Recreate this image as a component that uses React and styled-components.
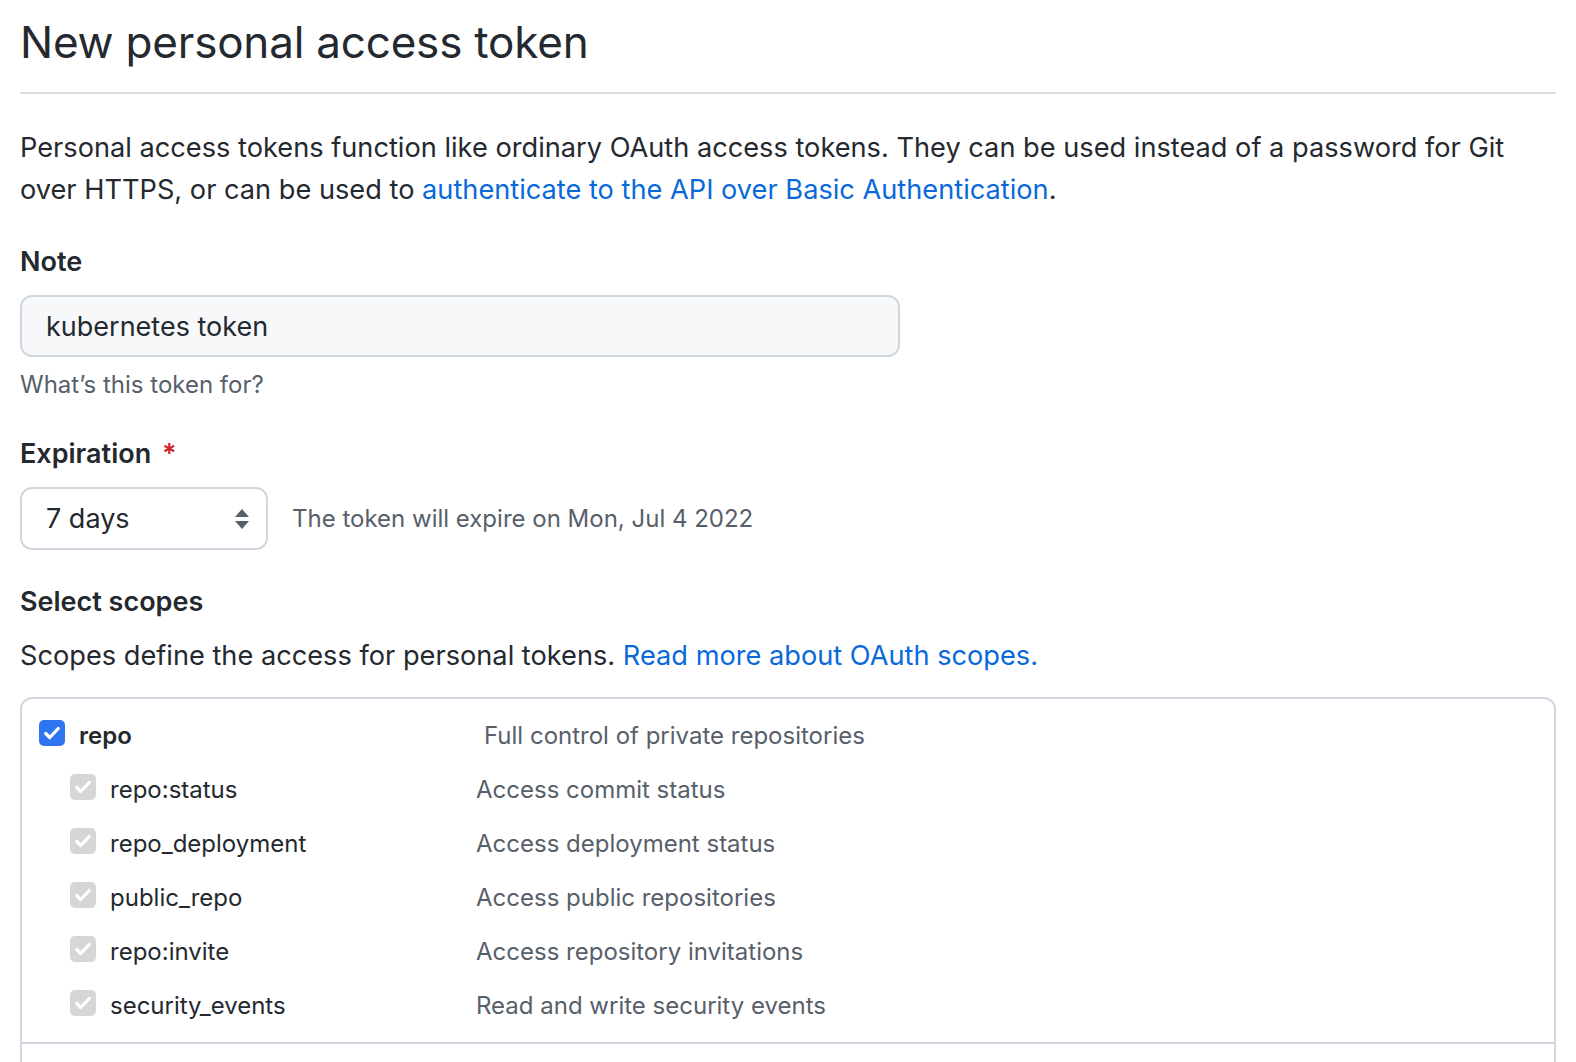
import styled, { createGlobalStyle } from 'styled-components'

const GlobalStyle = createGlobalStyle`
  * { box-sizing: border-box; }
  html, body { overflow: hidden; }
  body {
    margin: 0;
    background: #fff;
    color: #24292f;
    font-family: Inter, "Liberation Sans", sans-serif;
  }
`

const SCOPES = [
  { name: 'repo:status', desc: 'Access commit status' },
  { name: 'repo_deployment', desc: 'Access deployment status' },
  { name: 'public_repo', desc: 'Access public repositories' },
  { name: 'repo:invite', desc: 'Access repository invitations' },
  { name: 'security_events', desc: 'Read and write security events' }
]

function CheckIcon () {
  return (
    <svg width='16' height='16' viewBox='0 0 16 16' fill='none'>
      <path d='M3 8.4l3.2 3.2L13 4.4' stroke='#fff' strokeWidth='2.6' strokeLinecap='round' strokeLinejoin='round' />
    </svg>
  )
}

export default function App () {
  return (
    <>
      <GlobalStyle />
      <Page>
        <Subhead>
          <Title>New personal access token</Title>
        </Subhead>
        <Lead>
          Personal access tokens function like ordinary OAuth access tokens. They can be used instead of a password for Git
          over HTTPS, or can be used to <TextLink href='#'>authenticate to the API over Basic Authentication</TextLink>.
        </Lead>

        <Label>Note</Label>
        <NoteInput defaultValue='kubernetes token' />
        <Hint>What’s this token for?</Hint>

        <Label>Expiration <Required>*</Required></Label>
        <ExpirationRow>
          <Select>
            <span>7 days</span>
            <svg width='16' height='24' viewBox='0 0 16 24'>
              <path d='M8 2l7 8H1z' fill='#57606a' />
              <path d='M8 22l7-8H1z' fill='#57606a' />
            </svg>
          </Select>
          <ExpireNote>The token will expire on Mon, Jul 4 2022</ExpireNote>
        </ExpirationRow>

        <Label $gap={31}>Select scopes</Label>
        <ScopesIntro>
          Scopes define the access for personal tokens. <TextLink href='#'>Read more about OAuth scopes.</TextLink>
        </ScopesIntro>

        <ScopeBox>
          <ScopeGroup>
            <ScopeRow $labelWidth={445}>
              <ScopeName>
                <Checkbox $enabled><CheckIcon /></Checkbox>
                <GroupName>repo</GroupName>
              </ScopeName>
              <ScopeDesc>Full control of private repositories</ScopeDesc>
            </ScopeRow>
            {SCOPES.map(s => (
              <ScopeRow key={s.name} $labelWidth={406} $indent>
                <ScopeName>
                  <Checkbox><CheckIcon /></Checkbox>
                  <SubName>{s.name}</SubName>
                </ScopeName>
                <ScopeDesc>{s.desc}</ScopeDesc>
              </ScopeRow>
            ))}
          </ScopeGroup>
          <ScopeGroup $empty />
        </ScopeBox>
      </Page>
    </>
  )
}

const Page = styled.div`
  height: 100vh;
  overflow: hidden;
  padding: 11px 20px 0 20px;
`

const Subhead = styled.div`
  padding-bottom: 19px;
  border-bottom: 2px solid #d8dee4;
`

const Title = styled.h2`
  margin: 0;
  font-size: 44px;
  font-weight: 400;
  line-height: 62px;
  letter-spacing: -0.2px;
  color: #24292f;
`

const Lead = styled.p`
  margin: 33px 0 0;
  font-size: 27.2px;
  line-height: 42px;
`

const TextLink = styled.a`
  color: #0969da;
  text-decoration: none;
`

const Label = styled.div`
  margin-top: ${p => p.$gap || 30}px;
  font-size: 27px;
  font-weight: 600;
  line-height: 42px;
`

const Required = styled.span`
  color: #cf222e;
  margin-left: 4px;
`

const NoteInput = styled.input`
  display: block;
  margin-top: 12px;
  width: 880px;
  height: 62px;
  padding: 0 24px;
  border: 2px solid #d0d7de;
  border-radius: 12px;
  background: #f6f8fa;
  color: #24292f;
  font-family: inherit;
  font-size: 27px;
  outline: none;
`

const Hint = styled.div`
  margin-top: 10px;
  font-size: 24px;
  line-height: 36px;
  color: #57606a;
`

const ExpirationRow = styled.div`
  display: flex;
  align-items: center;
  gap: 24px;
  margin-top: 12px;
`

const Select = styled.div`
  display: flex;
  align-items: center;
  justify-content: space-between;
  width: 248px;
  height: 63px;
  padding: 0 16px 0 24px;
  border: 2px solid #d0d7de;
  border-radius: 12px;
  background: #fff;
  font-size: 27px;
`

const ExpireNote = styled.span`
  font-size: 24px;
  color: #57606a;
`

const ScopesIntro = styled.p`
  margin: 12px 0 0;
  font-size: 27.2px;
  line-height: 42px;
`

const ScopeBox = styled.div`
  margin-top: 20px;
  border: 2px solid #d0d7de;
  border-radius: 12px;
`

const ScopeGroup = styled.div`
  padding: 9px 0 10px;
  min-height: ${p => p.$empty ? '80px' : 'auto'};
  & + & {
    border-top: 2px solid #d0d7de;
  }
`

const ScopeRow = styled.div`
  display: grid;
  grid-template-columns: ${p => p.$labelWidth}px 1fr;
  align-items: center;
  height: 54px;
  padding-left: ${p => p.$indent ? 48 : 17}px;
`

const ScopeName = styled.div`
  display: flex;
  align-items: center;
  gap: 14px;
`

const Checkbox = styled.span`
  display: inline-flex;
  align-items: center;
  justify-content: center;
  flex: none;
  width: 26px;
  height: 26px;
  margin-top: -4px;
  border-radius: 5px;
  background: ${p => p.$enabled ? '#2f74f0' : '#d6d6d6'};
  svg { width: 20px; height: 20px; }
`

const GroupName = styled.span`
  font-size: 24px;
  font-weight: 600;
`

const SubName = styled.span`
  font-size: 24px;
`

const ScopeDesc = styled.span`
  font-size: 24px;
  color: #57606a;
`
